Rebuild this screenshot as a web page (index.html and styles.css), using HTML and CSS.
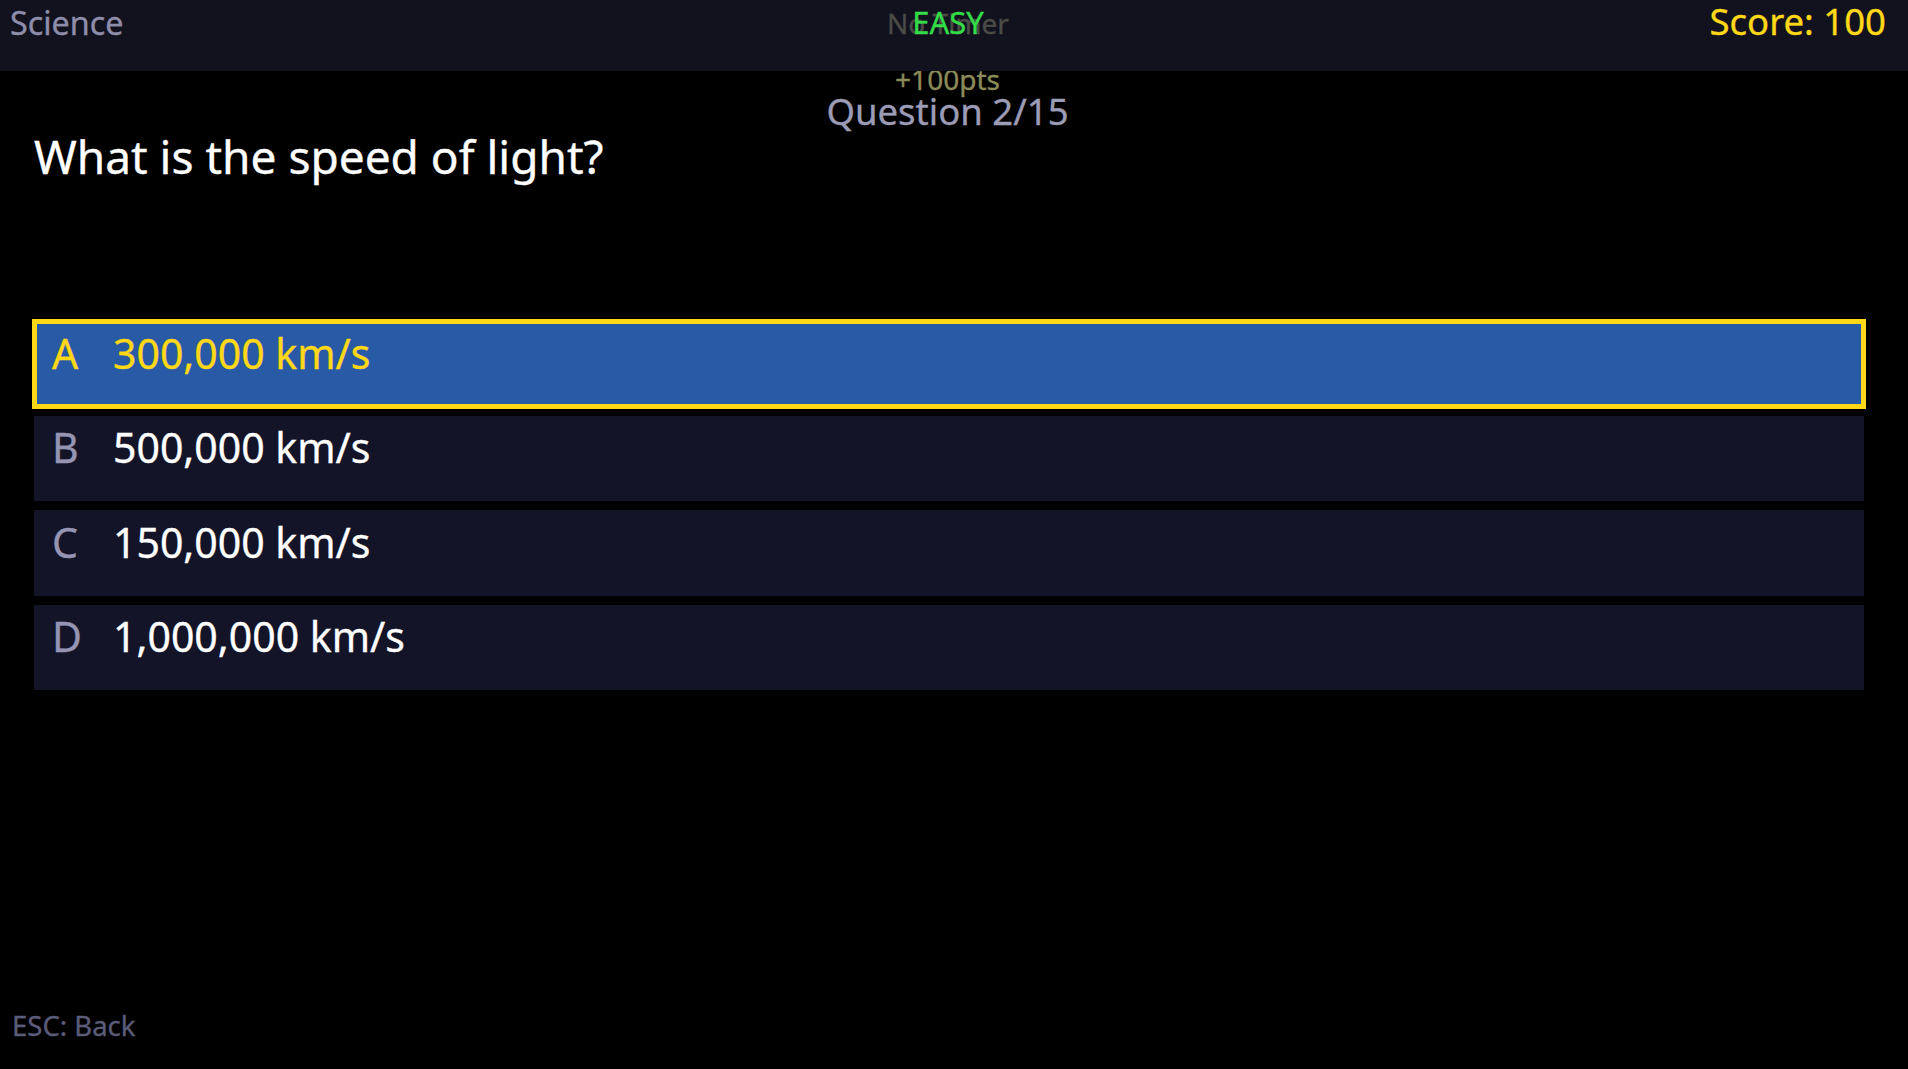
FILE: index.html
```html
<!DOCTYPE html>
<html lang="en">
<head>
<meta charset="utf-8">
<title>Quiz - Science</title>
<link rel="stylesheet" href="styles.css">
</head>
<body>
<header class="topbar">
  <div class="category">Science</div>
  <div class="center-stack">
    <span class="timer">No Timer</span>
    <span class="difficulty">EASY</span>
  </div>
  <div class="score">Score: 100</div>
</header>
<main class="quiz">
  <div class="progress">
    <div class="points">+100pts</div>
    <div class="counter">Question 2/15</div>
  </div>
  <h1 class="question">What is the speed of light?</h1>
  <ul class="answers">
    <li class="answer selected"><span class="letter">A</span><span class="text">300,000 km/s</span></li>
    <li class="answer"><span class="letter">B</span><span class="text">500,000 km/s</span></li>
    <li class="answer"><span class="letter">C</span><span class="text">150,000 km/s</span></li>
    <li class="answer"><span class="letter">D</span><span class="text">1,000,000 km/s</span></li>
  </ul>
</main>
<footer class="hint">ESC: Back</footer>
</body>
</html>
```
FILE: styles.css
```css
html, body {
  margin: 0;
  padding: 0;
  background: #000000;
}
body {
  font-family: "Noto Sans", "Open Sans", "DejaVu Sans", sans-serif;
  -webkit-text-stroke: 0.35px currentColor;
  min-height: 100vh;
  display: flex;
  flex-direction: column;
  overflow: hidden;
}

.topbar {
  position: relative;
  z-index: 1;
  height: 71px;
  background: #12121f;
  display: grid;
  grid-template-columns: 1fr auto 1fr;
  align-items: start;
  padding: 0 22px 0 10px;
}
.category {
  font-size: 32.3px;
  line-height: 45px;
  color: #8e8eab;
}
.center-stack {
  display: grid;
  justify-items: center;
  align-items: start;
}
.center-stack > span {
  grid-area: 1 / 1;
}
.timer {
  font-size: 28px;
  line-height: 46px;
  color: #4b4b46;
}
.difficulty {
  font-size: 31px;
  line-height: 44px;
  color: #33dd48;
}
.score {
  justify-self: end;
  font-size: 36.5px;
  line-height: 42px;
  color: #ffd817;
}

.quiz {
  display: flex;
  flex-direction: column;
}
.progress {
  padding-right: 13px;
  text-align: center;
  margin-top: -6px;
}
.points {
  font-size: 28px;
  line-height: 28px;
  color: #8b8b58;
}
.counter {
  margin-top: 0;
  font-size: 36.5px;
  line-height: 36px;
  color: #9c9cb7;
}
.question {
  margin: 4px 0 0 0;
  padding-left: 34px;
  font-size: 46px;
  line-height: 46px;
  font-weight: normal;
  color: #ffffff;
}

.answers {
  list-style: none;
  margin: 142px 0 0 34px;
  padding: 0;
  width: 1830px;
  display: flex;
  flex-direction: column;
  gap: 9px;
}
.answer {
  box-sizing: border-box;
  height: 85.5px;
  padding: 11.5px 0 0 18px;
  background: #141428;
  display: flex;
  align-items: flex-start;
  font-size: 41px;
  line-height: 41px;
}
.answer .letter {
  width: 61px;
  flex: none;
  color: #9595b3;
}
.answer .text {
  color: #ffffff;
}
.answer.selected {
  background: #295aa6;
  outline: 5px solid #ffd817;
  outline-offset: -3px;
}
.answer.selected .letter,
.answer.selected .text {
  color: #ffd817;
}

.hint {
  margin-top: auto;
  padding: 0 0 30px 12px;
  font-size: 27.5px;
  line-height: 27px;
  color: #5b5b7a;
}
```
